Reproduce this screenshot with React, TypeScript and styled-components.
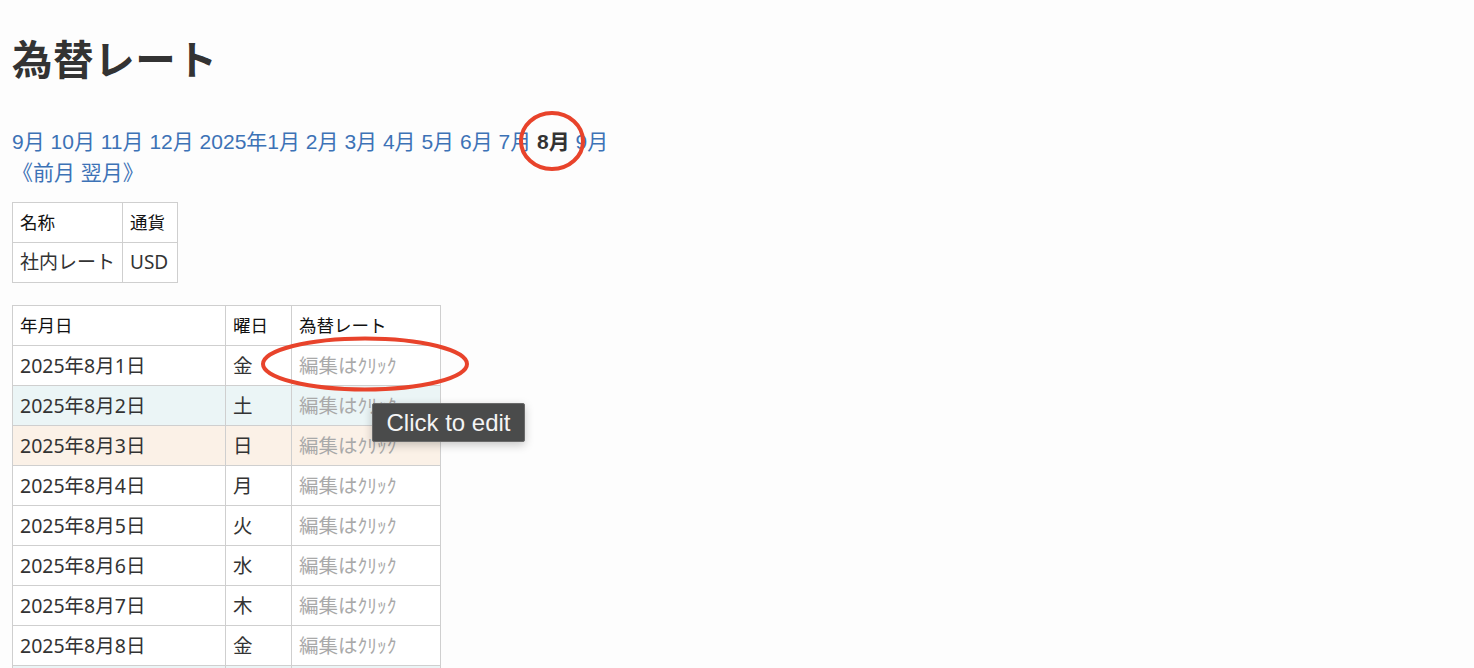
import React from "react";
import styled, { createGlobalStyle } from "styled-components";

const GlobalStyle = createGlobalStyle`
  html, body {
    margin: 0;
    padding: 0;
    background: #fdfdfd;
  }
  body {
    font-family: "Noto Sans", "Noto Sans CJK JP", sans-serif;
    color: #333;
  }
`;

const Page = styled.div`
  position: relative;
  padding: 34px 12px 40px;
`;

const Title = styled.h1`
  margin: 0;
  font-size: 40.5px;
  line-height: 48px;
  font-weight: 700;
  color: #333;
  font-family: "Noto Sans CJK JP", sans-serif;
  letter-spacing: 0.6px;
`;

const MonthNav = styled.nav`
  margin-top: 44px;
  font-size: 21px;
  line-height: 31px;
  font-family: "Liberation Sans", "Noto Sans CJK JP", sans-serif;
`;

const NavLine = styled.div`
  white-space: nowrap;
`;

const MonthLink = styled.a<{ $current?: boolean }>`
  color: ${(p) => (p.$current ? "#333" : "#3c72b6")};
  font-weight: ${(p) => (p.$current ? 700 : 400)};
  text-decoration: none;
  cursor: pointer;
`;

const Table = styled.table<{ $w: number }>`
  border-collapse: collapse;
  table-layout: fixed;
  width: ${(p) => p.$w}px;
  font-size: 19.5px;
  line-height: 27px;
  background: #fff;
`;

const InfoTable = styled(Table)`
  margin-top: 14px;
  font-size: 19px;
`;

const RateTable = styled(Table)`
  margin-top: 22px;
`;

const Th = styled.th<{ $w?: number }>`
  border: 1px solid #cfcfcf;
  padding: 6px 7px;
  text-align: left;
  font-weight: 400;
  font-size: 17.5px;
  color: #111;
  width: ${(p) => (p.$w ? `${p.$w}px` : "auto")};
  box-sizing: border-box;
`;

const Td = styled.td`
  border: 1px solid #cfcfcf;
  padding: 6px 7px;
  color: #333;
  white-space: nowrap;
  overflow: visible;
`;

const Row = styled.tr<{ $tone?: "sat" | "sun" }>`
  background: ${(p) =>
    p.$tone === "sat" ? "#ebf5f6" : p.$tone === "sun" ? "#fbf1e7" : "#fff"};
`;

const EditCell = styled(Td)`
  color: #a9a9a9;
  cursor: pointer;
`;

const Tooltip = styled.div`
  position: absolute;
  left: 372px;
  top: 403px;
  width: 153px;
  height: 39px;
  box-sizing: border-box;
  background: #4a4b4b;
  border: 1px solid #6a6a6a;
  border-radius: 2px;
  color: #f4f4f4;
  font-family: "Liberation Sans", sans-serif;
  font-size: 24px;
  line-height: 37px;
  text-align: center;
  box-shadow: 0 3px 10px rgba(0, 0, 0, 0.22);
`;

const Mark = styled.svg`
  position: absolute;
  overflow: visible;
  pointer-events: none;
`;

const months = [
  "9月",
  "10月",
  "11月",
  "12月",
  "2025年1月",
  "2月",
  "3月",
  "4月",
  "5月",
  "6月",
  "7月",
  "8月",
  "9月",
];

const weekdays = ["日", "月", "火", "水", "木", "金", "土"];

// August 2025, the 1st falls on a Friday
const days = Array.from({ length: 31 }, (_, i) => {
  const day = i + 1;
  const wd = (5 + i) % 7;
  return { day, wd };
});

export default function App() {
  return (
    <>
      <GlobalStyle />
      <Page>
        <Title>為替レート</Title>

        <MonthNav>
          <NavLine>
            {months.map((m, i) => (
              <React.Fragment key={i}>
                <MonthLink $current={i === 11}>{m}</MonthLink>
                {i < months.length - 1 ? " " : ""}
              </React.Fragment>
            ))}
          </NavLine>
          <NavLine>
            <MonthLink>《前月</MonthLink> <MonthLink>翌月》</MonthLink>
          </NavLine>
        </MonthNav>

        <InfoTable $w={165}>
          <tbody>
            <tr>
              <Th $w={110}>名称</Th>
              <Th $w={55}>通貨</Th>
            </tr>
            <Row>
              <Td>社内レート</Td>
              <Td>USD</Td>
            </Row>
          </tbody>
        </InfoTable>

        <RateTable $w={428}>
          <tbody>
            <tr>
              <Th $w={213}>年月日</Th>
              <Th $w={66}>曜日</Th>
              <Th $w={149}>為替レート</Th>
            </tr>
            {days.map(({ day, wd }) => (
              <Row key={day} $tone={wd === 6 ? "sat" : wd === 0 ? "sun" : undefined}>
                <Td>2025年8月{day}日</Td>
                <Td>{weekdays[wd]}</Td>
                <EditCell title="Click to edit">編集はｸﾘｯｸ</EditCell>
              </Row>
            ))}
          </tbody>
        </RateTable>

        <Tooltip>Click to edit</Tooltip>

        <Mark style={{ left: 519, top: 110 }} width="66" height="62">
          <ellipse cx="33" cy="31" rx="31" ry="28" fill="none" stroke="#e8432b" strokeWidth="4" />
        </Mark>
        <Mark style={{ left: 261, top: 336 }} width="208" height="56">
          <ellipse cx="104" cy="28" rx="102" ry="25.5" fill="none" stroke="#e8432b" strokeWidth="4" />
        </Mark>
      </Page>
    </>
  );
}
